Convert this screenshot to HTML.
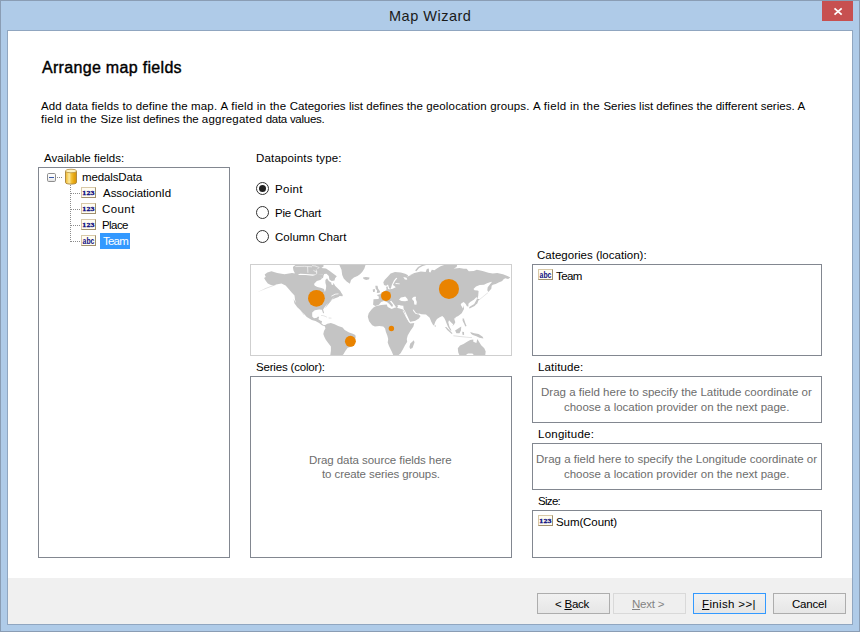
<!DOCTYPE html>
<html><head><meta charset="utf-8"><title>Map Wizard</title>
<style>
html,body{margin:0;padding:0;}
body{width:860px;height:632px;position:relative;overflow:hidden;background:#afcbe8;font-family:"Liberation Sans",sans-serif;font-size:11.5px;color:#000;}
.abs{position:absolute;}
.t{position:absolute;white-space:nowrap;line-height:14px;height:14px;}
#frame{left:0;top:0;width:858px;height:630px;border:1px solid #8a9db4;}
#client{left:7px;top:30px;width:844px;height:593px;border:1px solid #90a6c0;background:#fff;}
#footer{left:8px;top:578px;width:844px;height:46px;background:#f0f0f0;}
#close{left:822px;top:1px;width:31px;height:20px;background:#c75050;}
.box{position:absolute;border:1px solid #828790;background:#fff;box-sizing:border-box;}
.btn{position:absolute;box-sizing:border-box;height:21px;width:73px;top:593px;border:1px solid #adadad;background:linear-gradient(#f1f1f1,#e6e6e6);}
.gray{color:#6d6d6d;}
.radio{position:absolute;width:11px;height:11px;border:1px solid #333;border-radius:50%;background:#fff;}
.ico{position:absolute;width:15px;height:11px;box-sizing:border-box;border:1px solid #a08f6d;border-top-color:#d8c9a8;border-left-color:#d8c9a8;background:#fffcf2;}
.ico span{position:absolute;left:-4px;top:0;width:21px;text-align:center;font-weight:bold;color:#0c0c80;font-size:7px;line-height:10px;font-family:"Liberation Serif",serif;letter-spacing:0.2px;-webkit-text-stroke:0.3px #0c0c80;transform:scaleX(1.12);}
.ico span.a{font-family:"Liberation Sans",sans-serif;font-size:9.5px;letter-spacing:0;line-height:9px;transform:scaleX(0.72);-webkit-text-stroke:0;}
</style>
<style id="ls">
#title{letter-spacing:0.5px;margin-left:-1.0px;}
#head{letter-spacing:0.312px;margin-left:0.0px;}
#lAvail{letter-spacing:0.026px;margin-left:0.0px;}
#tMedals{letter-spacing:-0.123px;margin-left:-1.0px;}
#tAssoc{letter-spacing:-0.024px;margin-left:1.0px;}
#tCount{letter-spacing:0.425px;margin-left:0.0px;}
#tPlace{letter-spacing:-0.575px;margin-left:0.0px;}
#tTeam{letter-spacing:-0.8px;margin-left:1.0px;}
#lDp{letter-spacing:0.161px;margin-left:0.0px;}
#r1{letter-spacing:0.325px;margin-left:0.0px;}
#r2{letter-spacing:-0.211px;margin-left:0.0px;}
#r3{letter-spacing:0.045px;margin-left:0.0px;}
#lSeries{letter-spacing:-0.186px;margin-left:0.0px;}
#s1{letter-spacing:-0.066px;margin-left:-1.0px;}
#s2{letter-spacing:-0.095px;margin-left:0.0px;}
#lCat{letter-spacing:0.014px;margin-left:-1.0px;}
#cTeam{letter-spacing:-0.6px;margin-left:0.0px;}
#lLat{letter-spacing:0.15px;margin-left:0.0px;}
#la1{letter-spacing:0.007px;margin-left:-1.0px;}
#la2{letter-spacing:-0.023px;margin-left:0.0px;}
#lLon{letter-spacing:0.244px;margin-left:0.0px;}
#lo1{letter-spacing:0.018px;margin-left:-1.0px;}
#lo2{letter-spacing:-0.023px;margin-left:0.0px;}
#lSize{letter-spacing:-0.7px;margin-left:0.0px;}
#sSum{letter-spacing:-0.09px;margin-left:0.0px;}
#bBack{letter-spacing:-0.24px;margin-left:-8.0px;}
#bNext{letter-spacing:-0.2px;margin-left:0.0px;}
#bFin{letter-spacing:0.355px;margin-left:0.0px;}
#bCan{letter-spacing:-0.22px;margin-left:0.0px;}
</style></head><body>
<div class="abs" id="frame"></div>
<div class="abs" id="client"></div>
<div class="abs" id="footer"></div>
<div class="abs" id="close"><svg width="31" height="20" style="position:absolute;left:0;top:0"><path d="M12.5 7.4 L19.7 13.6 M19.7 7.4 L12.5 13.6" stroke="#fff" stroke-width="1.8" fill="none"/></svg></div>
<span class="t" id="title" style="left:390px;top:8px;font-size:14.5px;line-height:17px;height:17px;color:#1a1a1a;">Map Wizard</span>
<span class="t" id="head" style="left:42px;top:58px;font-size:16px;line-height:19px;height:19px;-webkit-text-stroke:0.4px #000;">Arrange map fields</span>
<div id="p1"><span class="t" style="left:40.9px;top:99px;white-space:pre;letter-spacing:0.147px;">Add data fields to define the map. </span><span class="t" style="left:220.6px;top:99px;white-space:pre;letter-spacing:0.216px;">A field in the </span><span class="t" style="left:289.7px;top:99px;white-space:pre;letter-spacing:0.035px;">Categories list defines the </span><span class="t" style="left:426.2px;top:99px;white-space:pre;letter-spacing:0.161px;">geolocation groups. </span><span class="t" style="left:533.0px;top:99px;white-space:pre;letter-spacing:0.303px;">A field in the </span><span class="t" style="left:603.4px;top:99px;white-space:pre;letter-spacing:-0.009px;">Series list defines the </span><span class="t" style="left:715.7px;top:99px;white-space:pre;letter-spacing:0.041px;">different series. A</span></div>
<div id="p2"><span class="t" style="left:40.9px;top:112px;white-space:pre;letter-spacing:0.313px;">field in the </span><span class="t" style="left:100.6px;top:112px;white-space:pre;letter-spacing:-0.049px;">Size list defines the </span><span class="t" style="left:201.8px;top:112px;white-space:pre;letter-spacing:0.228px;">aggregated </span><span class="t" style="left:265.7px;top:112px;white-space:pre;letter-spacing:-0.274px;">data values.</span></div>

<span class="t" id="lAvail" style="left:44px;top:151px;">Available fields:</span>
<div class="box" id="bAvail" style="left:38px;top:167px;width:192px;height:391px;"></div>


<div class="abs" id="sel" style="left:100px;top:233px;width:30px;height:16px;background:#3399ff;"></div>
<svg class="abs" id="treelines" style="left:38px;top:167px;" width="192" height="100" shape-rendering="crispEdges">
<g stroke="#8c8c8c" stroke-width="1" stroke-dasharray="1 1" fill="none">
<path d="M32.5 18 V75"/>
<path d="M33 26.5 H43"/><path d="M33 42.5 H43"/><path d="M33 58.5 H43"/><path d="M33 74.5 H43"/>
<path d="M19 10.5 H24"/>
</g>
<defs><linearGradient id="eg" x1="0" x2="0" y1="0" y2="1"><stop offset="0" stop-color="#fff"/><stop offset="0.6" stop-color="#f6f6f6"/><stop offset="1" stop-color="#dedede"/></linearGradient></defs><rect x="9.5" y="6.5" width="8" height="8" rx="1.2" fill="url(#eg)" stroke="#8e8e8e" shape-rendering="geometricPrecision"/>
<path d="M11 10.5 H16" stroke="#3a59a8" stroke-width="1"/>
</svg>
<svg class="abs" id="cyl" style="left:64px;top:168px;" width="14" height="18">
<defs><linearGradient id="cg" x1="0" x2="1" y1="0" y2="0"><stop offset="0" stop-color="#e9b53a"/><stop offset="0.12" stop-color="#f5c84c"/><stop offset="0.34" stop-color="#fbe9a3"/><stop offset="0.52" stop-color="#f3c33c"/><stop offset="0.78" stop-color="#e6a50c"/><stop offset="1" stop-color="#d59612"/></linearGradient></defs>
<path d="M1.5 3 V14.6 C1.5 16.6 12.5 16.6 12.5 14.6 V3 Z" fill="url(#cg)" stroke="#a98235" stroke-width="0.9"/>
<ellipse cx="7" cy="3" rx="5.5" ry="1.8" fill="#fdf3c4" stroke="#b8913c" stroke-width="0.8"/>
</svg>
<span class="t" id="tMedals" style="left:83px;top:170px;">medalsData</span>
<div class="ico" style="left:81px;top:187px;"><span>123</span></div>
<div class="ico" style="left:81px;top:203px;"><span>123</span></div>
<div class="ico" style="left:81px;top:219px;"><span>123</span></div>
<div class="ico" style="left:81px;top:235px;"><span class="a">abc</span></div>
<span class="t" id="tAssoc" style="left:102px;top:186px;">AssociationId</span>
<span class="t" id="tCount" style="left:102px;top:202px;">Count</span>
<span class="t" id="tPlace" style="left:102px;top:218px;">Place</span>
<span class="t" id="tTeam" style="left:102px;top:234px;color:#fff;">Team</span>

<span class="t" id="lDp" style="left:256px;top:151px;">Datapoints type:</span>
<div class="radio" style="left:256px;top:182px;"><div class="abs" style="left:2px;top:2px;width:7px;height:7px;border-radius:50%;background:#222;"></div></div>
<div class="radio" style="left:256px;top:206px;"></div>
<div class="radio" style="left:256px;top:230px;"></div>
<span class="t" id="r1" style="left:275px;top:182px;">Point</span>
<span class="t" id="r2" style="left:275px;top:206px;">Pie Chart</span>
<span class="t" id="r3" style="left:275px;top:230px;">Column Chart</span>

<div class="box" id="bMap" style="left:250px;top:264px;width:262px;height:92px;border-color:#cfcfcf;"></div>

<!--MAP--><svg class="abs" id="map" style="left:250px;top:264px;" width="262" height="92" viewBox="0 0 262 92"><defs><clipPath id="mc"><rect x="1" y="1" width="260" height="90"/></clipPath></defs><g clip-path="url(#mc)"><path fill="#c4c4c4" d="M14.7 10.5 L17.3 8.4 L21.5 7.3 L27.2 8.9 L34.5 10.2 L41.9 8.9 L46.0 9.4 L49.2 11.0 L55.5 11.0 L62.8 11.7 L67.0 10.5 L72.2 9.9 L75.3 11.5 L75.3 11.5 L78.8 17.1 L81.7 19.1 L83.9 19.4 L85.1 21.7 L87.9 24.5 L90.2 26.8 L91.1 28.5 L92.8 31.1 L92.5 32.2 L89.6 31.9 L88.5 33.0 L85.1 34.2 L82.0 35.7 L79.1 37.9 L76.9 40.8 L74.8 44.4 L85.2 32.0 L80.8 36.4 L76.4 40.7 L74.2 43.7 L73.1 45.5 L74.1 49.1 L73.1 49.3 L71.9 45.8 L69.1 45.5 L64.8 46.2 L62.2 48.4 L62.2 52.4 L64.0 54.2 L66.9 53.8 L68.0 52.4 L69.1 53.1 L68.4 55.3 L70.6 56.8 L72.0 57.1 L71.5 59.5 L73.5 61.0 L75.7 61.1 L74.2 62.0 L72.0 61.3 L69.1 59.1 L65.5 56.9 L61.8 56.0 L56.8 53.1 L50.9 46.6 L47.3 43.3 L44.4 39.3 L43.6 34.9 L49.2 45.0 L46.0 39.8 L45.0 35.6 L44.5 31.4 L41.9 28.8 L38.7 25.1 L35.6 21.5 L31.4 19.4 L26.2 20.4 L23.5 21.5 L20.9 20.9 L17.8 19.4 L15.7 16.7 L14.1 14.1 L15.7 13.1Z M42.9 3.1 L46.0 0.5 L60.0 0.0 L73.1 0.0 L73.7 2.3 L71.4 4.0 L76.0 4.6 L79.4 6.8 L83.4 9.7 L86.8 12.3 L85.1 14.2 L84.5 16.5 L81.7 17.1 L79.4 15.4 L78.8 12.0 L76.5 9.7 L74.2 10.0 L73.7 11.4 L73.3 10.2 L67.0 10.6 L63.3 10.5 L55.5 9.9 L50.2 9.8 L47.6 10.5 L45.0 9.4 L43.4 6.3Z M89.3 0.0 L115.8 0.0 L114.4 4.4 L112.2 8.0 L110.0 10.2 L107.5 12.0 L103.9 13.5 L101.0 16.0 L99.9 19.7 L96.6 17.5 L93.7 14.6 L92.2 10.9 L91.5 5.8 L89.7 1.8Z M112.9 13.5 L115.8 13.0 L119.5 13.5 L119.1 15.3 L116.2 16.0 L113.6 14.9Z M125.3 21.7 L127.5 21.7 L128.2 24.8 L130.0 27.3 L129.7 28.8 L126.8 29.1 L127.1 26.6 L125.7 24.8Z M122.7 25.5 L124.9 25.1 L124.9 27.7 L123.1 28.0Z M133.3 18.2 L134.8 15.7 L137.7 12.7 L140.6 9.5 L145.0 8.0 L150.8 8.4 L155.2 9.8 L158.1 11.3 L157.3 12.7 L161.0 10.9 L165.4 10.2 L160.0 10.9 L164.4 9.1 L170.9 7.6 L175.7 7.9 L176.8 5.1 L178.8 4.4 L179.1 8.0 L180.4 8.4 L181.8 5.8 L184.4 6.2 L186.9 4.4 L190.6 2.2 L195.0 0.7 L199.3 0.0 L207.3 0.4 L206.6 2.9 L203.7 4.4 L209.5 4.0 L215.4 5.1 L202.0 4.4 L206.4 4.7 L211.5 4.4 L216.6 4.7 L218.8 7.3 L223.8 6.9 L226.8 5.8 L232.6 6.9 L238.4 8.7 L242.8 9.5 L247.2 9.1 L253.0 10.2 L257.4 12.0 L260.3 13.5 L258.1 14.9 L255.2 14.2 L253.0 15.7 L252.3 17.1 L248.6 18.6 L245.7 20.0 L242.8 20.8 L241.7 21.8 L241.3 24.8 L238.4 28.0 L237.3 26.2 L237.7 23.3 L239.9 20.4 L242.1 17.8 L239.9 18.2 L237.0 19.3 L234.0 20.8 L229.7 21.1 L226.0 22.6 L223.5 25.1 L224.6 26.2 L227.5 26.6 L227.9 29.1 L226.8 32.8 L223.8 35.7 L220.2 37.9 L218.4 39.7 L218.4 42.6 L216.9 42.2 L215.7 39.9 L213.7 38.0 L211.5 39.3 L210.7 40.8 L212.9 44.4 L213.5 41.3 L214.0 44.9 L211.7 49.3 L208.2 52.0 L205.5 53.3 L204.2 54.8 L205.3 58.2 L203.8 61.0 L202.0 61.7 L203.4 60.4 L201.7 59.0 L199.0 56.2 L198.3 58.2 L199.4 62.6 L201.5 66.6 L200.3 66.6 L198.1 63.0 L196.5 59.2 L195.5 56.4 L194.1 53.7 L192.3 52.1 L189.7 53.3 L187.0 55.1 L185.3 57.7 L184.1 61.3 L183.2 61.3 L181.3 57.7 L179.7 53.7 L177.7 52.0 L176.0 50.6 L171.5 50.2 L168.4 49.3 L168.7 50.6 L170.6 52.0 L168.9 54.6 L165.3 56.8 L160.0 58.3 L160.3 58.2 L155.0 47.1 L153.7 45.3 L153.2 41.3 L153.1 41.8 L150.8 41.4 L149.3 40.9 L147.4 41.2 L148.0 43.1 L146.6 44.1 L144.5 40.9 L141.3 36.8 L139.9 37.3 L142.8 40.8 L142.8 42.1 L142.0 43.0 L139.1 39.7 L136.9 37.9 L134.0 37.1 L131.1 37.9 L128.9 40.8 L125.3 41.9 L123.1 40.8 L123.5 35.3 L128.6 35.0 L128.9 32.8 L126.8 31.0 L130.0 30.2 L131.8 28.8 L134.8 26.9 L136.6 25.5 L136.1 22.7 L137.7 22.6 L138.0 25.1 L140.6 25.5 L139.1 24.0 L138.0 20.4 L136.2 21.8 L134.0 21.1Z M117.8 52.8 L118.7 49.3 L121.3 45.7 L123.5 43.5 L125.7 42.2 L131.1 40.9 L136.8 40.4 L137.7 43.1 L141.7 44.9 L145.2 43.5 L149.7 44.4 L152.8 45.6 L154.6 47.5 L155.9 52.8 L158.5 57.3 L160.3 59.5 L164.3 58.9 L163.4 62.6 L160.3 67.0 L157.7 71.5 L156.8 75.0 L157.2 77.7 L155.0 81.2 L153.2 84.7 L150.6 89.2 L147.9 91.7 L143.5 91.7 L141.7 87.4 L139.0 82.1 L137.7 78.5 L138.2 75.0 L137.3 71.5 L135.9 67.9 L135.1 64.4 L133.3 62.6 L129.3 62.1 L124.9 62.6 L122.2 61.3 L119.1 57.3Z M159.4 83.0 L160.3 79.4 L163.9 76.3 L164.5 78.5 L162.5 83.9 L160.3 84.9Z M74.4 61.6 L77.3 59.8 L80.9 59.1 L84.6 60.2 L88.2 62.0 L92.6 63.5 L94.7 66.0 L99.1 68.6 L102.8 69.7 L105.3 71.1 L105.7 72.9 L104.9 76.6 L102.0 82.4 L97.7 83.8 L95.5 86.8 L93.3 90.4 L91.8 91.7 L80.2 91.7 L80.9 86.8 L80.9 82.4 L78.0 78.8 L75.8 75.8 L74.4 72.9 L73.3 70.0 L74.0 67.1 L75.5 64.2Z M165.1 6.6 L168.0 2.9 L172.4 0.7 L176.0 0.0 L176.4 0.9 L172.7 2.0 L169.1 4.0 L166.4 7.3Z M227.5 26.6 L228.6 26.9 L228.2 32.0 L227.1 35.8 L226.6 32.8 L227.5 29.1Z M226.8 35.1 L229.7 35.0 L229.3 36.1 L227.6 36.4 L227.1 39.3 L224.6 41.9 L219.5 44.6 L219.1 43.3 L223.8 40.4 L226.0 37.9Z M219.3 43.1 L224.2 40.0 L226.4 36.0 L228.6 36.0 L227.3 39.5 L223.3 42.4 L219.7 44.6Z M213.2 54.6 L214.2 54.8 L214.1 56.9 L213.2 56.6Z M212.6 54.2 L214.0 55.1 L215.3 59.0 L216.6 62.1 L215.3 62.6 L214.0 59.5 L212.6 56.8Z M205.1 66.6 L208.2 64.4 L211.3 62.6 L210.9 66.6 L209.5 69.2 L206.4 69.2Z M212.2 67.7 L214.0 68.1 L214.1 71.0 L212.5 70.7Z M195.0 63.0 L196.3 63.0 L202.5 69.2 L201.7 70.1 L197.2 66.1Z M184.6 61.3 L185.9 61.5 L185.7 62.8 L184.7 62.4Z M204.3 52.8 L205.6 53.0 L205.5 54.3 L204.3 54.1Z M220.2 67.9 L224.2 69.2 L228.6 70.1 L232.6 72.8 L233.5 74.6 L229.5 73.7 L226.4 72.3 L222.8 71.0 L221.1 69.7Z M207.8 84.3 L210.0 81.6 L213.5 79.9 L217.1 77.7 L220.2 75.9 L223.3 75.4 L223.3 77.7 L226.4 79.0 L227.3 75.0 L229.0 77.7 L231.2 81.2 L234.3 84.3 L235.7 87.4 L235.2 91.4 L224.2 91.4 L222.4 89.6 L218.0 89.6 L215.3 91.4 L209.5 91.4 L208.2 88.3Z"/><path fill="#c4c4c4" fill-opacity="0.55" d="M25.1 20.4 L26.0 21.0 L16.7 24.5 L7.3 28.3 L15.7 24.1Z M49.3 44.5 L50.2 44.4 L54.2 50.4 L53.5 50.8Z M71.0 51.1 L74.2 51.5 L77.3 53.0 L76.8 53.5 L73.9 52.2 L71.0 51.7Z M78.6 53.6 L81.4 53.7 L81.5 54.6 L78.7 54.4Z M229.7 35.0 L237.7 28.6 L238.0 29.0 L230.0 35.5Z M203.4 71.3 L209.6 71.9 L216.7 72.7 L222.0 73.2 L222.0 74.1 L209.6 72.9 L203.4 72.2Z"/><path fill="#fff" d="M64.0 19.9 L66.8 17.1 L70.3 16.0 L73.1 13.7 L73.7 11.1 L75.4 10.3 L77.7 11.7 L77.1 14.2 L75.4 16.0 L75.4 18.8 L76.2 21.7 L76.0 24.5 L74.9 28.0 L74.0 25.1 L71.4 23.9 L67.4 23.1 L64.8 21.7Z M81.2 18.9 L83.1 19.1 L83.2 21.0 L81.7 20.8Z M81.1 32.0 L85.1 29.7 L88.5 29.5 L88.5 30.2 L85.4 30.5 L81.7 32.6Z M146.2 13.7 L147.3 14.3 L145.1 17.1 L142.9 21.1 L144.2 21.7 L145.8 23.2 L142.0 24.9 L140.4 25.1 L141.2 23.2 L141.9 20.8 L143.9 16.6Z M145.4 19.1 L149.7 19.5 L149.7 20.3 L145.7 20.1Z M153.3 13.1 L156.6 13.8 L157.3 15.7 L154.8 15.4Z M149.0 35.7 L150.8 33.6 L153.7 33.1 L155.2 32.4 L157.3 34.8 L158.1 36.4 L155.2 37.3 L151.5 36.9Z M162.1 34.2 L163.9 32.8 L166.1 32.8 L165.7 35.0 L166.8 37.9 L166.4 40.8 L164.3 40.4 L163.9 37.1 L162.4 35.7Z M162.7 45.4 L163.7 45.7 L166.0 48.9 L168.6 49.9 L168.4 50.6 L165.5 49.8 L163.4 47.3Z"/><path fill="none" stroke="#fff" stroke-width="0.75" d="M153.0 46.8 L156.3 52.8 L159.4 58.3 L164.6 57.8"/><path fill="none" stroke="#fff" stroke-opacity="0.6" stroke-width="1" d="M45.3 2.6 L54.6 2.3 L62.0 2.8 M57.6 2.8 L57.9 8.8 M66.2 5.6 L66.7 10.0 M62.0 1.6 L66.2 2.1 M63.4 6.3 L65.7 7.7 L67.4 8.0 M65.7 2.3 L69.1 3.4 L67.4 5.1 M71.4 13.7 L73.1 15.4"/><circle cx="66.40" cy="34.30" r="8.40" fill="#e98300"/><circle cx="136.00" cy="31.90" r="5.00" fill="#e98300"/><circle cx="198.95" cy="24.95" r="10.05" fill="#e98300"/><circle cx="141.40" cy="64.50" r="2.70" fill="#e98300"/><circle cx="100.40" cy="77.30" r="5.45" fill="#e98300"/></g></svg><!--/MAP-->
<span class="t" id="lSeries" style="left:256px;top:360px;">Series (color):</span>
<div class="box" id="bSeries" style="left:250px;top:376px;width:262px;height:182px;"></div>
<span class="t gray" id="s1" style="left:310px;top:453px;">Drag data source fields here</span>
<span class="t gray" id="s2" style="left:322px;top:467px;">to create series groups.</span>

<span class="t" id="lCat" style="left:538px;top:248px;">Categories (location):</span>
<div class="box" id="bCat" style="left:532px;top:264px;width:290px;height:92px;"></div>
<div class="ico" style="left:538px;top:269px;"><span class="a">abc</span></div>
<span class="t" id="cTeam" style="left:556px;top:269px;">Team</span>

<span class="t" id="lLat" style="left:538px;top:360px;">Latitude:</span>
<div class="box" id="bLat" style="left:532px;top:376px;width:290px;height:47px;"></div>
<span class="t gray" id="la1" style="left:542px;top:385px;">Drag a field here to specify the Latitude coordinate or</span>
<span class="t gray" id="la2" style="left:564px;top:400px;">choose a location provider on the next page.</span>

<span class="t" id="lLon" style="left:538px;top:427px;">Longitude:</span>
<div class="box" id="bLon" style="left:532px;top:443px;width:290px;height:47px;"></div>
<span class="t gray" id="lo1" style="left:537px;top:452px;">Drag a field here to specify the Longitude coordinate or</span>
<span class="t gray" id="lo2" style="left:564px;top:467px;">choose a location provider on the next page.</span>

<span class="t" id="lSize" style="left:538px;top:494px;">Size:</span>
<div class="box" id="bSize" style="left:532px;top:510px;width:290px;height:48px;"></div>
<div class="ico" style="left:538px;top:515px;"><span>123</span></div>
<span class="t" id="sSum" style="left:556px;top:515px;">Sum(Count)</span>

<div class="btn" style="left:537px;"></div>
<div class="btn" style="left:613px;border-color:#d9d9d9;background:#efefef;"></div>
<div class="btn" style="left:693px;border-color:#3399ff;"></div>
<div class="btn" style="left:773px;"></div>
<span class="t" id="bBack" style="left:563px;top:597px;">&lt; <u>B</u>ack</span>
<span class="t" id="bNext" style="left:632px;top:597px;color:#838383;"><u>N</u>ext &gt;</span>
<span class="t" id="bFin" style="left:702px;top:597px;"><u>F</u>inish &gt;&gt;|</span>
<span class="t" id="bCan" style="left:792px;top:597px;">Cancel</span>
</body></html>
